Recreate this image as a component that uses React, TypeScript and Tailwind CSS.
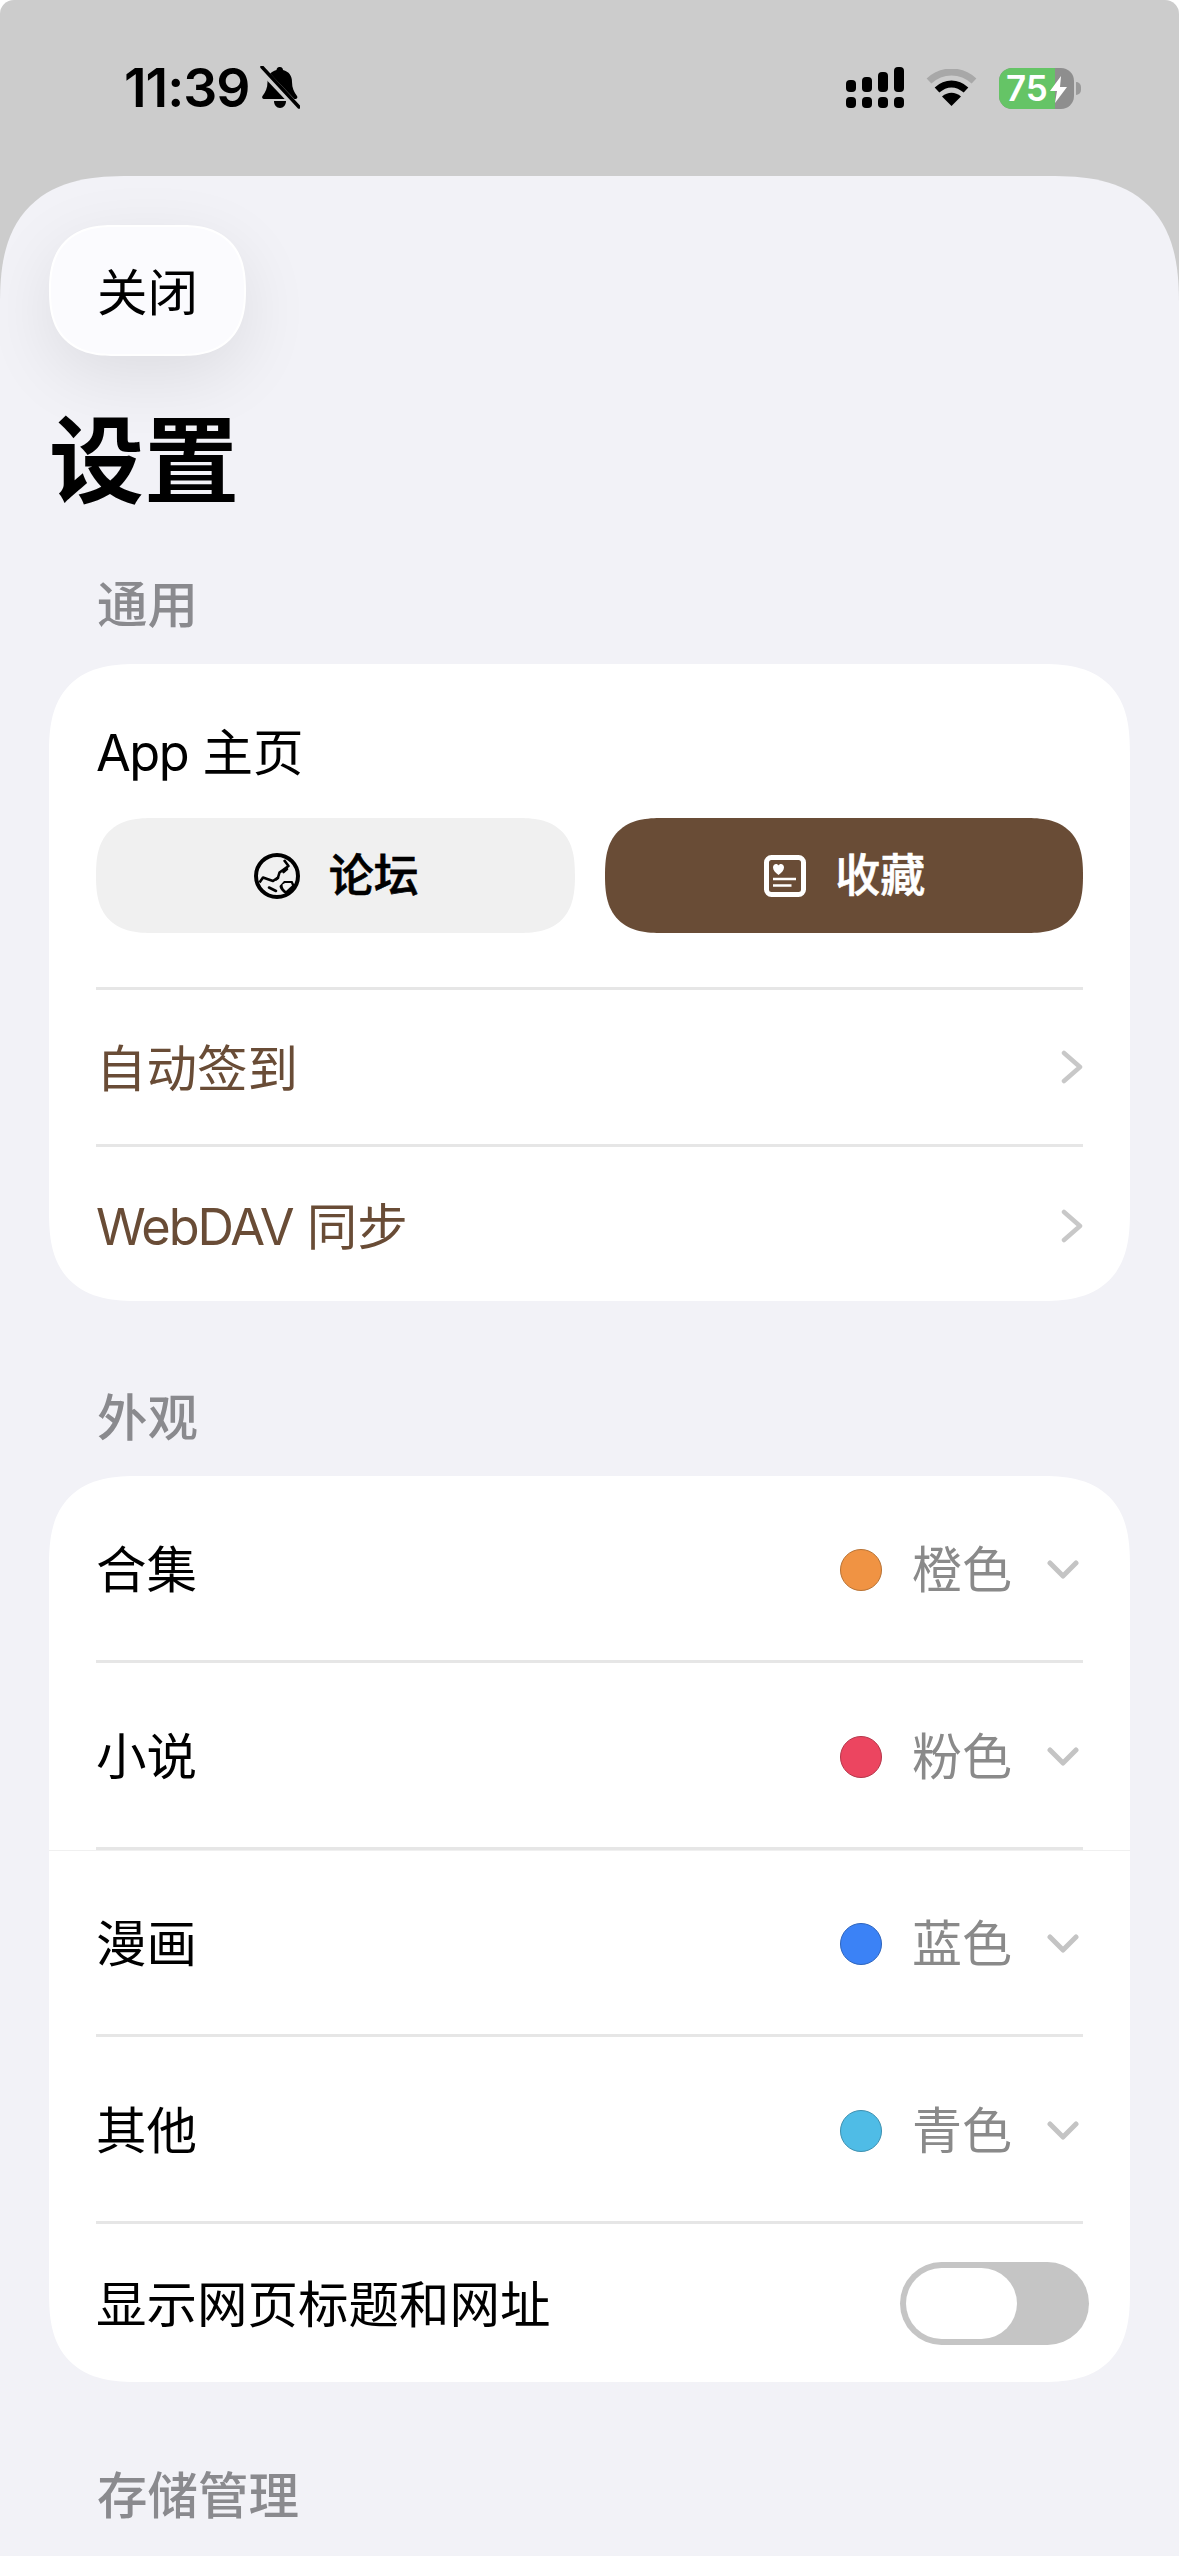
import type { ReactNode } from 'react'

const cjk = "font-['Inter','Noto_Sans_CJK_SC',sans-serif]"

function StatusBar() {
  return (
    <div className="flex h-[176px] shrink-0 items-start justify-between pr-[98px] pl-[124px] pt-[64px]">
      <div className="flex items-center gap-[10px]">
        <span className="font-['Inter',sans-serif] text-[53.5px] leading-[47px] font-semibold tracking-[-1px] text-black">11:39</span>
        <svg width="40" height="43" viewBox="0 0 40 43">
          <path d="M20 1c2 0 3 1.500 3 3 6 1.500 9 6 9 12 0 6 2 10 5 14 1 1.500 0 3-1.500 3H4c-1.500 0-2.500-1.500-1.500-3 3-4 5-8 5-14 0-6 3-10.500 9-12 0-1.500 1-3 3-3z" fill="#000" />
          <path d="M14 35h12c0 4-2.500 7-6 7s-6-3-6-7z" fill="#000" />
          <path d="M0 2 38 42" stroke="#cccccc" strokeWidth="7" />
          <path d="M2 1 39 41" stroke="#000" strokeWidth="3.500" strokeLinecap="round" />
        </svg>
      </div>
      <div className="flex items-center gap-[22px] pt-[3px]">
        <svg width="58" height="42" viewBox="0 0 58 42" fill="#000">
          <rect x="0" y="13" width="10" height="12" rx="4" />
          <rect x="16" y="10" width="10" height="15" rx="4" />
          <rect x="32" y="5" width="10" height="20" rx="4" />
          <rect x="48" y="0" width="10" height="25" rx="4" />
          <rect x="0" y="30" width="10" height="11" rx="4" />
          <rect x="16" y="30" width="10" height="11" rx="4" />
          <rect x="32" y="30" width="10" height="11" rx="4" />
          <rect x="48" y="30" width="10" height="11" rx="4" />
        </svg>
        <svg width="51" height="38" viewBox="0 0 51 38">
          <path d="M3 12C16 0 35 0 48 12" fill="none" stroke="#a8a8a8" strokeWidth="7" />
          <path d="M11 21C20 13 31 13 40 21" fill="none" stroke="#000" strokeWidth="7" />
          <path d="M25.500 37 16 27.500C22 22.500 29 22.500 35 27.500z" fill="#000" />
        </svg>
        <div className="flex items-center gap-[2px]">
          <div className="relative flex h-[41px] w-[75px] overflow-hidden rounded-[13px] bg-[#8e8e8e]">
            <div className="flex h-full w-[56px] items-center bg-[#65c466] pl-[7px]">
              <span className="font-['Inter',sans-serif] text-[35px] leading-none font-semibold text-white">75</span>
            </div>
            <svg className="absolute top-[8px] left-[51px]" width="17" height="27" viewBox="0 0 17 27">
              <path d="M11 0 0 15h7L5 27 17 11h-7z" fill="#fff" />
            </svg>
          </div>
          <div className="h-[13px] w-[5px] rounded-r-full bg-[#9a9a9a]" />
        </div>
      </div>
    </div>
  )
}

function SectionLabel({ children, className }: { children: ReactNode; className: string }) {
  return <div className={`pl-[97px] text-[50.5px] leading-[60px] font-medium text-[#8a8a8e] ${className}`}>{children}</div>
}

function Chevron() {
  return (
    <svg width="22" height="34" viewBox="0 0 22 34" fill="none">
      <path d="M3 3 19 17 3 31" stroke="#c8c8c8" strokeWidth="4.500" strokeLinecap="round" strokeLinejoin="round" />
    </svg>
  )
}

function LinkRow({ children, className }: { children: ReactNode; className: string }) {
  return (
    <div className={`flex items-center justify-between text-[50.5px] text-[#694c36] ${className}`}>
      <span className="pt-[3px]">{children}</span>
      <Chevron />
    </div>
  )
}

function GlobeIcon() {
  return (
    <svg width="46" height="46" viewBox="0 0 46 46" fill="none">
      <circle cx="23" cy="23" r="21" stroke="#000" strokeWidth="4" />
      <path d="M30 7 34.500 13 29 17 25.500 19.500 24 24.500 19 28 9 24.500 5.500 29.500" stroke="#000" strokeWidth="2.600" strokeLinejoin="round" />
      <path d="M25.500 33 30 28H38.500L41 33 32 41.500C29 39 26 37 25.500 33z" fill="#000" />
      <path d="M28.500 31.500 31 30H37L38 32.500 32 38C30 36.500 28.500 35 28.500 31.500z" fill="#f0f0f0" />
      <path d="M15 34.500 22 38M22 26.500 24 25M29.500 19 33 16" stroke="#000" strokeWidth="2.600" strokeLinecap="round" />
    </svg>
  )
}

function FavIcon() {
  return (
    <svg width="42" height="42" viewBox="0 0 42 42" fill="none">
      <rect x="2.500" y="2.500" width="37" height="37" rx="5" stroke="#fff" strokeWidth="5" />
      <path d="M14.500 20c-3-2.500-5.500-4.500-5.500-7.500 0-2 1.500-3.500 3-3.500 1 0 2 .5 2.500 1.500.5-1 1.500-1.500 2.500-1.500 1.500 0 3 1.500 3 3.500 0 3-2.500 5-5.500 7.500z" fill="#fff" />
      <path d="M9 24h23M9 30.500h18.500" stroke="#fff" strokeWidth="2.500" />
    </svg>
  )
}

function Segment({ active, icon, label }: { active?: boolean; icon: ReactNode; label: string }) {
  return (
    <div
      className={`flex h-[115px] flex-1 items-center justify-center gap-[29px] rounded-[58px] pl-[2px] [corner-shape:superellipse(1.4)] ${
        active ? 'bg-[#694c36] text-white' : 'bg-[#f0f0f0] text-black'
      }`}
    >
      {icon}
      <span className="text-[45px] leading-none font-medium [-webkit-text-stroke:0.6px]">{label}</span>
    </div>
  )
}

function ColorRow({ label, dot, ring, value, className }: { label: string; dot: string; ring: string; value: string; className: string }) {
  return (
    <div className={`flex items-center justify-between border-b-[3px] border-[#e6e6e6] pt-[4px] ${className}`}>
      <span className="text-[50.5px] text-black">{label}</span>
      <div className="flex items-center">
        <div className={`size-[42px] rounded-full border ${dot} ${ring}`} />
        <span className="ml-[30px] text-[50px] text-[#8a8a8a]">{value}</span>
        <svg className="mr-[4px] ml-[35px]" width="32" height="22" viewBox="0 0 32 22" fill="none">
          <path d="M3 4 16 17 29 4" stroke="#c4c4c4" strokeWidth="5" strokeLinecap="round" strokeLinejoin="round" />
        </svg>
      </div>
    </div>
  )
}

export default function App() {
  return (
    <div className={`h-[2556px] w-[1179px] overflow-hidden bg-white ${cjk}`}>
      <div className="flex h-full flex-col overflow-hidden rounded-t-[14px] bg-[#cccccc]">
        <StatusBar />
        <div className="flex-1 overflow-hidden rounded-t-[130px] bg-[#f2f2f7] [corner-shape:superellipse(1.4)]">
          <div className="pt-[49px] pl-[49px]">
            <div className="flex h-[131px] w-[197px] items-center justify-center rounded-[65px] border-2 border-white bg-[#fbfbfe] pt-[5px] text-[50.5px] text-black shadow-[0_20px_70px_rgba(0,0,0,0.09)] [corner-shape:superellipse(1.3)]">
              关闭
            </div>
          </div>
          <h1 className="mt-[50px] pl-[49px] text-[95px] leading-[112px] font-bold text-black">设置</h1>
          <SectionLabel className="mt-[57px]">通用</SectionLabel>
          <div className="mx-[49px] mt-[29px] h-[637px] rounded-[90px] bg-white px-[47px] [corner-shape:superellipse(1.4)]">
            <div className="pt-[55px] text-[50.5px] leading-[68px] text-black">
              <span className="tracking-[-1.5px]">App</span> 主页
            </div>
            <div className="mt-[31px] flex gap-[30px]">
              <Segment icon={<GlobeIcon />} label="论坛" />
              <Segment active icon={<FavIcon />} label="收藏" />
            </div>
            <div className="mt-[54px] h-[3px] bg-[#e6e6e6]" />
            <LinkRow className="h-[154px]">自动签到</LinkRow>
            <div className="h-[3px] bg-[#e6e6e6]" />
            <LinkRow className="h-[157px]">
              <span className="tracking-[-2px]">WebDAV</span> 同步
            </LinkRow>
          </div>
          <SectionLabel className="mt-[87px]">外观</SectionLabel>
          <div className="relative mx-[49px] mt-[28px] h-[906px] rounded-[90px] bg-white px-[47px] [corner-shape:superellipse(1.4)]">
            <ColorRow label="合集" dot="bg-[#f09343]" ring="border-[#b87233]" value="橙色" className="h-[187px]" />
            <ColorRow label="小说" dot="bg-[#ec4560]" ring="border-[#b53549]" value="粉色" className="h-[187px]" />
            <ColorRow label="漫画" dot="bg-[#3b82f6]" ring="border-[#2d64bd]" value="蓝色" className="h-[187px]" />
            <ColorRow label="其他" dot="bg-[#4fbce6]" ring="border-[#3d90b0]" value="青色" className="h-[187px]" />
            <div className="flex h-[158px] items-center justify-between">
              <span className="pt-[3px] text-[50.5px] text-black">显示网页标题和网址</span>
              <div className="mr-[-6px] h-[83px] w-[189px] rounded-full bg-[#c5c5c5] p-[6px]">
                <div className="h-[71px] w-[111px] rounded-full bg-white" />
              </div>
            </div>
            <div className="absolute inset-x-0 top-[374px] h-px bg-[#f0f0f0]" />
          </div>
          <SectionLabel className="mt-[84px]">存储管理</SectionLabel>
        </div>
      </div>
    </div>
  )
}
